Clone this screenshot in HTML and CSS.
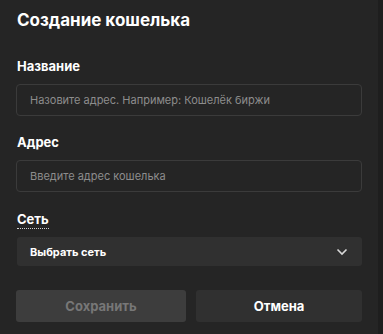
FILE: index.html
```html
<!DOCTYPE html>
<html lang="ru">

<head>
    <meta charset="UTF-8">
    <title>Создание кошелька</title>
    <link rel="stylesheet" href="styles.css">
</head>

<body>
    <div class="modal">
        <h1>Создание кошелька</h1>

        <div class="field first">
            <label class="label">Название</label>
            <div class="input">Назовите адрес. Например: Кошелёк биржи</div>
        </div>

        <div class="field">
            <label class="label">Адрес</label>
            <div class="input">Введите адрес кошелька</div>
        </div>

        <div class="field net">
            <label class="label dotted">Сеть</label>
            <div class="select">
                <span>Выбрать сеть</span>
                <svg width="12" height="8" viewBox="0 0 12 8">
                    <path d="M1.5 1.5 L6 6 L10.5 1.5" fill="none" stroke="#d8d8d8" stroke-width="1.6" />
                </svg>
            </div>
        </div>

        <div class="buttons">
            <button class="btn disabled">Сохранить</button>
            <button class="btn cancel">Отмена</button>
        </div>
    </div>
    <div class="scrollbar"></div>
</body></html>
```

FILE: styles.css
```css
* {
    box-sizing: border-box;
}

body {
    margin: 0;
    height: 334px;
    display: flex;
    background-color: #252525;
    font-family: Inter, "Noto Sans", sans-serif;
    color: #ffffff;
    overflow: hidden;
}

.modal {
    flex: 1;
    padding: 9px 16px 0 16px;
}

.scrollbar {
    width: 5px;
    background-color: #1e1e1e;
}

h1 {
    margin: 0 0 0 1px;
    font-size: 17px;
    font-weight: 700;
    line-height: 22px;
}

.field {
    display: flex;
    flex-direction: column;
    margin-top: 18px;
}

.field.first {
    margin-top: 27px;
}

.field.net {
    margin-top: 19px;
}

.label {
    font-size: 13px;
    font-weight: 700;
    line-height: 16px;
    margin-left: 1px;
    margin-bottom: 10px;
}

.dotted {
    align-self: flex-start;
    border-bottom: 1px dotted #cfcfcf;
    padding-bottom: 1px;
    margin-bottom: 8px;
}

.input {
    height: 32px;
    border: 1px solid #3b3b3b;
    border-radius: 4px;
    padding: 0 13px;
    display: flex;
    align-items: center;
    font-size: 11px;
    color: #8d8d8d;
}

.select {
    height: 29px;
    margin-left: 1px;
    background-color: #303030;
    border-radius: 3px;
    padding: 0 14px 0 13px;
    display: flex;
    align-items: center;
    justify-content: space-between;
    font-size: 11px;
    font-weight: 700;
}

.buttons {
    display: flex;
    gap: 10px;
    margin-top: 24px;
}

.btn {
    flex: 1;
    height: 32px;
    border: none;
    border-radius: 3px;
    font-family: Inter, "Noto Sans", sans-serif;
    font-size: 13px;
    font-weight: 700;
}

.disabled {
    background-color: #3d3d3d;
    color: #777777;
    flex-basis: 170px;
    flex-grow: 0;
}

.cancel {
    background-color: #303030;
    color: #ffffff;
}
```
